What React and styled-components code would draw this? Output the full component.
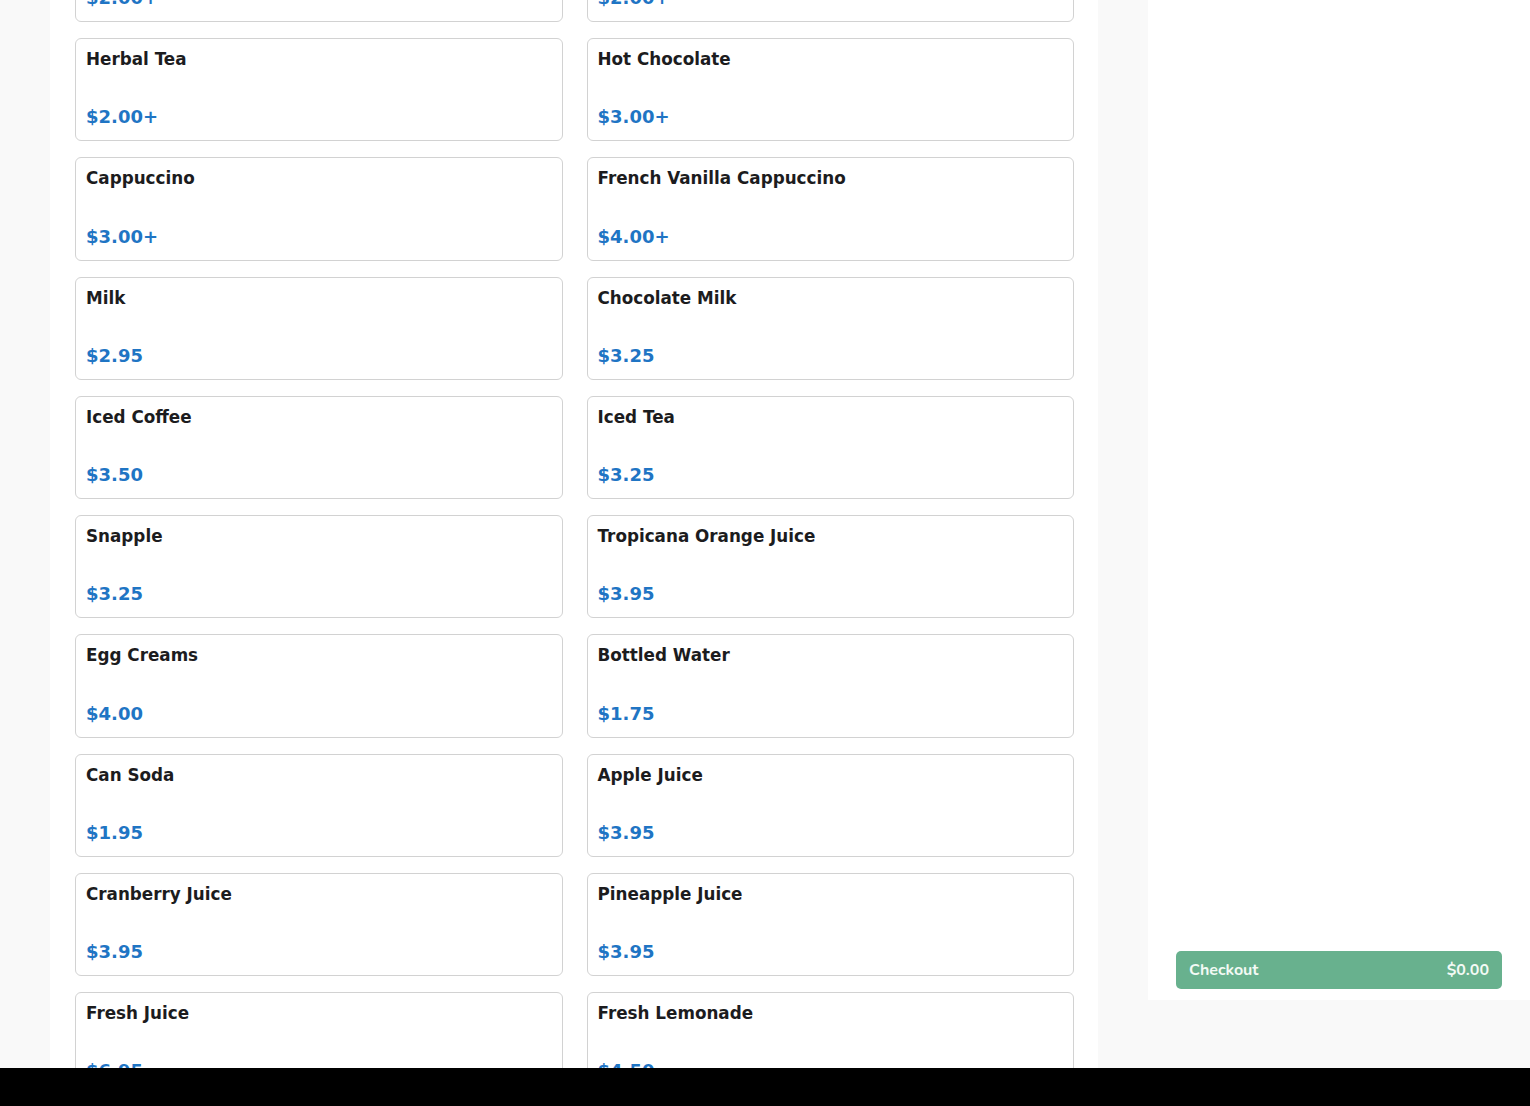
import React from "react";
import styled, { createGlobalStyle } from "styled-components";

const GlobalStyle = createGlobalStyle`
  html, body {
    margin: 0;
    padding: 0;
    background: #000;
  }
  * {
    box-sizing: border-box;
  }
`;

const Viewport = styled.div`
  height: 1068px;
  overflow: hidden;
  display: flex;
  gap: 50px;
  padding-left: 50px;
  background: #f9f9f9;
  font-family: "DejaVu Sans", Verdana, sans-serif;
`;

const BlackBar = styled.div`
  height: 38px;
  background: #000;
`;

const MenuPanel = styled.main`
  width: 1048px;
  flex-shrink: 0;
  background: #fff;
  padding: 0 24px 0 25px;
`;

const MenuGrid = styled.div`
  display: grid;
  grid-template-columns: 1fr 1fr;
  column-gap: 24px;
  row-gap: 16px;
  margin-top: -81.25px;
`;

const ItemCard = styled.div`
  height: 103.25px;
  border: 1px solid #d2d2d2;
  border-radius: 6px;
  background: #fff;
  padding: 10px 10px 13px;
  display: flex;
  flex-direction: column;
  justify-content: space-between;
  cursor: pointer;
`;

const ItemName = styled.div`
  font-size: 16.8px;
  font-weight: bold;
  color: #1c1c1e;
`;

const ItemPrice = styled.div`
  font-size: 18px;
  font-weight: bold;
  color: #1f75c4;
`;

const Sidebar = styled.aside`
  width: 382px;
  height: 1000px;
  flex-shrink: 0;
  background: #fff;
  display: flex;
  flex-direction: column;
  justify-content: flex-end;
  padding: 0 28px 11px;
`;

const CheckoutButton = styled.button`
  height: 38px;
  width: 100%;
  border: none;
  border-radius: 5px;
  background: #68b18e;
  color: #f3faf5;
  display: flex;
  align-items: center;
  justify-content: space-between;
  padding: 0 13px;
  font-family: "Nunito", "Lato", "Open Sans", sans-serif;
  font-size: 16px;
  font-weight: bold;
  cursor: pointer;
`;

const items = [
  ["Hot Tea", "$2.00+"],
  ["Coffee", "$2.00+"],
  ["Herbal Tea", "$2.00+"],
  ["Hot Chocolate", "$3.00+"],
  ["Cappuccino", "$3.00+"],
  ["French Vanilla Cappuccino", "$4.00+"],
  ["Milk", "$2.95"],
  ["Chocolate Milk", "$3.25"],
  ["Iced Coffee", "$3.50"],
  ["Iced Tea", "$3.25"],
  ["Snapple", "$3.25"],
  ["Tropicana Orange Juice", "$3.95"],
  ["Egg Creams", "$4.00"],
  ["Bottled Water", "$1.75"],
  ["Can Soda", "$1.95"],
  ["Apple Juice", "$3.95"],
  ["Cranberry Juice", "$3.95"],
  ["Pineapple Juice", "$3.95"],
  ["Fresh Juice", "$6.95"],
  ["Fresh Lemonade", "$4.50"],
];

function MenuItem({ name, price }) {
  return (
    <ItemCard>
      <ItemName>{name}</ItemName>
      <ItemPrice>{price}</ItemPrice>
    </ItemCard>
  );
}

export default function App() {
  return (
    <>
      <GlobalStyle />
      <Viewport>
        <MenuPanel>
          <MenuGrid>
            {items.map(([name, price]) => (
              <MenuItem key={name} name={name} price={price} />
            ))}
          </MenuGrid>
        </MenuPanel>
        <Sidebar>
          <CheckoutButton>
            <span>Checkout</span>
            <span>$0.00</span>
          </CheckoutButton>
        </Sidebar>
      </Viewport>
      <BlackBar />
    </>
  );
}
